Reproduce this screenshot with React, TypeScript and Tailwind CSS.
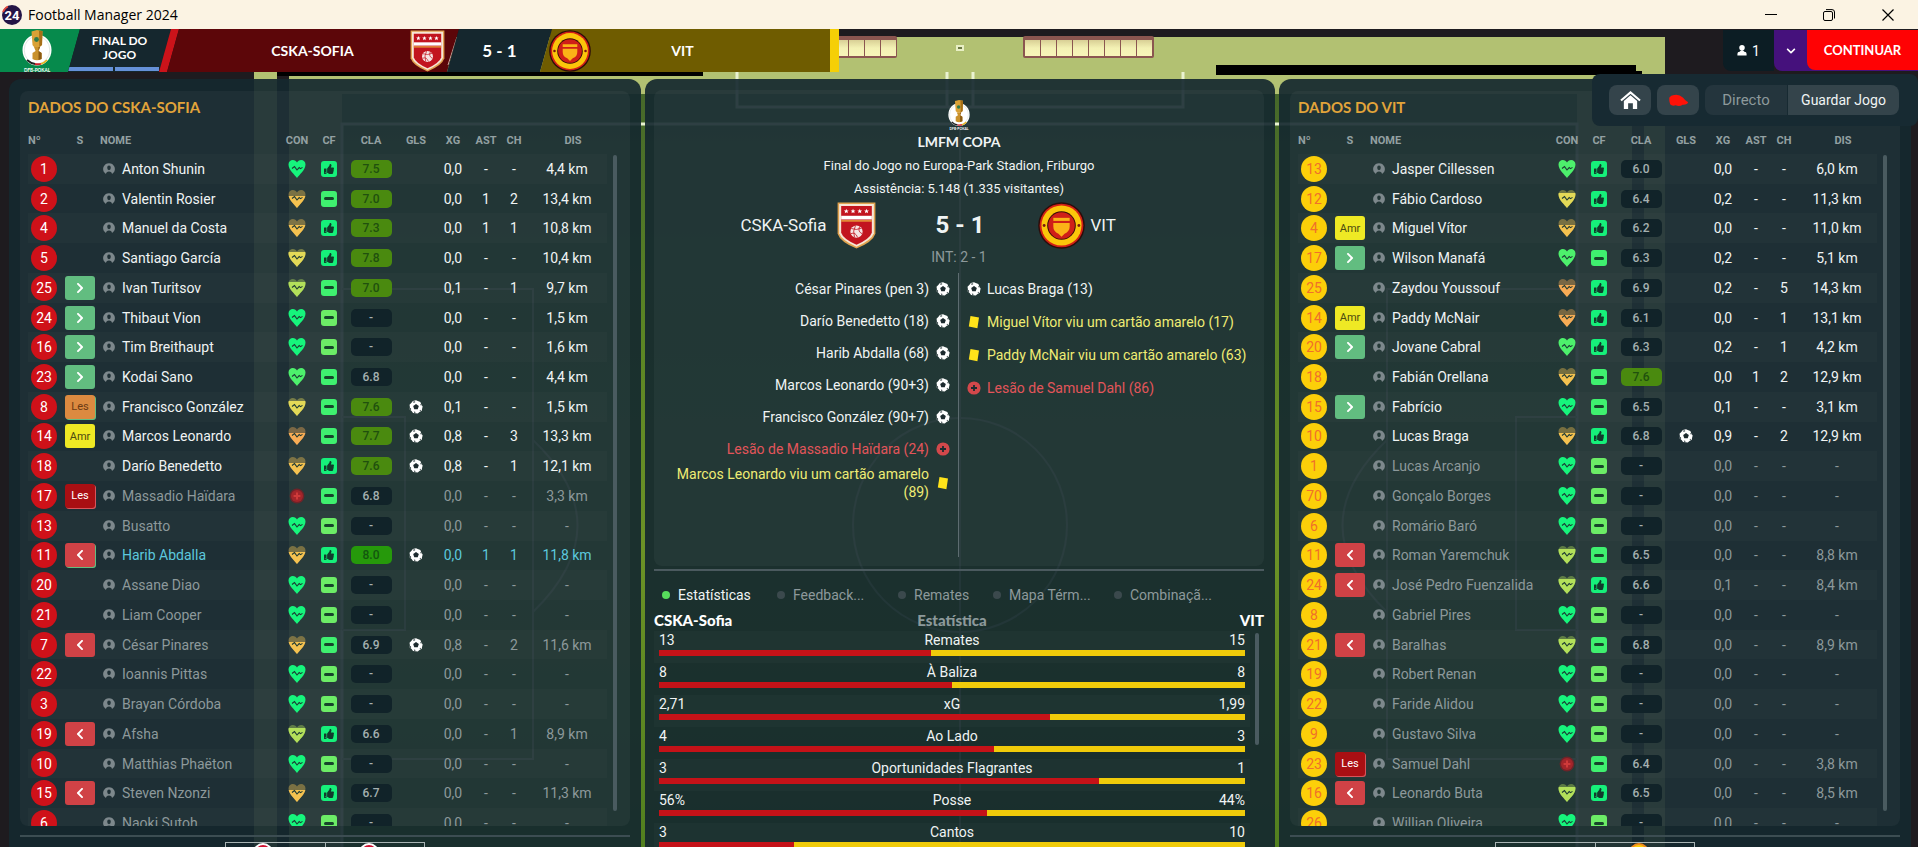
import React from "react";
import { FaThumbsUp, FaChevronLeft, FaChevronRight, FaChevronDown } from "react-icons/fa";

type Status = "in" | "out" | "amr" | "lesIn" | "lesOut" | "outIn";
type Heart = "full" | "good" | "lime" | "yellow" | "amber" | "orange" | "hurt";
type Player = {
  n: number;
  s?: Status;
  name: string;
  con: Heart;
  cf: "up" | "flat";
  cla: string;
  gol?: boolean;
  xg: string;
  ast: string;
  ch: string;
  dis: string;
  tone?: "dim" | "best";
};

const p = (
  n: number,
  s: Status | "",
  name: string,
  con: Heart,
  cf: "up" | "flat",
  cla: string,
  gol: boolean,
  xg: string,
  ast: string,
  ch: string,
  dis: string,
  tone?: "dim" | "best",
): Player => ({ n, s: s || undefined, name, con, cf, cla, gol, xg, ast, ch, dis, tone });

const HOME: Player[] = [
  p(1, "", "Anton Shunin", "full", "up", "7.5", false, "0,0", "-", "-", "4,4 km"),
  p(2, "", "Valentin Rosier", "amber", "flat", "7.0", false, "0,0", "1", "2", "13,4 km"),
  p(4, "", "Manuel da Costa", "amber", "up", "7.3", false, "0,0", "1", "1", "10,8 km"),
  p(5, "", "Santiago García", "yellow", "up", "7.8", false, "0,0", "-", "-", "10,4 km"),
  p(25, "in", "Ivan Turitsov", "lime", "flat", "7.0", false, "0,1", "-", "1", "9,7 km"),
  p(24, "in", "Thibaut Vion", "full", "flat", "-", false, "0,0", "-", "-", "1,5 km"),
  p(16, "in", "Tim Breithaupt", "full", "flat", "-", false, "0,0", "-", "-", "1,6 km"),
  p(23, "in", "Kodai Sano", "good", "flat", "6.8", false, "0,0", "-", "-", "4,4 km"),
  p(8, "lesIn", "Francisco González", "yellow", "flat", "7.6", true, "0,1", "-", "-", "1,5 km"),
  p(14, "amr", "Marcos Leonardo", "orange", "flat", "7.7", true, "0,8", "-", "3", "13,3 km"),
  p(18, "", "Darío Benedetto", "amber", "up", "7.6", true, "0,8", "-", "1", "12,1 km"),
  p(17, "lesOut", "Massadio Haïdara", "hurt", "flat", "6.8", false, "0,0", "-", "-", "3,3 km", "dim"),
  p(13, "", "Busatto", "full", "flat", "-", false, "0,0", "-", "-", "-", "dim"),
  p(11, "outIn", "Harib Abdalla", "amber", "up", "8.0", true, "0,0", "1", "1", "11,8 km", "best"),
  p(20, "", "Assane Diao", "full", "flat", "-", false, "0,0", "-", "-", "-", "dim"),
  p(21, "", "Liam Cooper", "full", "flat", "-", false, "0,0", "-", "-", "-", "dim"),
  p(7, "out", "César Pinares", "amber", "flat", "6.9", true, "0,8", "-", "2", "11,6 km", "dim"),
  p(22, "", "Ioannis Pittas", "full", "flat", "-", false, "0,0", "-", "-", "-", "dim"),
  p(3, "", "Brayan Córdoba", "full", "flat", "-", false, "0,0", "-", "-", "-", "dim"),
  p(19, "out", "Afsha", "lime", "up", "6.6", false, "0,0", "-", "1", "8,9 km", "dim"),
  p(10, "", "Matthias Phaëton", "full", "flat", "-", false, "0,0", "-", "-", "-", "dim"),
  p(15, "out", "Steven Nzonzi", "amber", "up", "6.7", false, "0,0", "-", "-", "11,3 km", "dim"),
  p(6, "", "Naoki Sutoh", "full", "flat", "-", false, "0,0", "-", "-", "-", "dim"),
];

const AWAY: Player[] = [
  p(13, "", "Jasper Cillessen", "good", "up", "6.0", false, "0,0", "-", "-", "6,0 km"),
  p(12, "", "Fábio Cardoso", "yellow", "up", "6.4", false, "0,2", "-", "-", "11,3 km"),
  p(4, "amr", "Miguel Vítor", "amber", "up", "6.2", false, "0,0", "-", "-", "11,0 km"),
  p(17, "in", "Wilson Manafá", "good", "flat", "6.3", false, "0,2", "-", "-", "5,1 km"),
  p(25, "", "Zaydou Youssouf", "orange", "up", "6.9", false, "0,2", "-", "5", "14,3 km"),
  p(14, "amr", "Paddy McNair", "orange", "up", "6.1", false, "0,0", "-", "1", "13,1 km"),
  p(20, "in", "Jovane Cabral", "good", "up", "6.3", false, "0,2", "-", "1", "4,2 km"),
  p(18, "", "Fabián Orellana", "amber", "flat", "7.6", false, "0,0", "1", "2", "12,9 km"),
  p(15, "in", "Fabrício", "full", "flat", "6.5", false, "0,1", "-", "-", "3,1 km"),
  p(10, "", "Lucas Braga", "amber", "up", "6.8", true, "0,9", "-", "2", "12,9 km"),
  p(1, "", "Lucas Arcanjo", "full", "flat", "-", false, "0,0", "-", "-", "-", "dim"),
  p(70, "", "Gonçalo Borges", "full", "flat", "-", false, "0,0", "-", "-", "-", "dim"),
  p(6, "", "Romário Baró", "full", "flat", "-", false, "0,0", "-", "-", "-", "dim"),
  p(11, "out", "Roman Yaremchuk", "lime", "flat", "6.5", false, "0,0", "-", "-", "8,8 km", "dim"),
  p(24, "out", "José Pedro Fuenzalida", "lime", "up", "6.6", false, "0,1", "-", "-", "8,4 km", "dim"),
  p(8, "", "Gabriel Pires", "full", "flat", "-", false, "0,0", "-", "-", "-", "dim"),
  p(21, "out", "Baralhas", "lime", "flat", "6.8", false, "0,0", "-", "-", "8,9 km", "dim"),
  p(19, "", "Robert Renan", "full", "flat", "-", false, "0,0", "-", "-", "-", "dim"),
  p(22, "", "Faride Alidou", "full", "flat", "-", false, "0,0", "-", "-", "-", "dim"),
  p(9, "", "Gustavo Silva", "full", "flat", "-", false, "0,0", "-", "-", "-", "dim"),
  p(23, "lesOut", "Samuel Dahl", "hurt", "flat", "6.4", false, "0,0", "-", "-", "3,8 km", "dim"),
  p(16, "out", "Leonardo Buta", "lime", "up", "6.5", false, "0,0", "-", "-", "8,5 km", "dim"),
  p(26, "", "Willian Oliveira", "full", "flat", "-", false, "0,0", "-", "-", "-", "dim"),
];

const STATS = [
  { home: "13", label: "Remates", away: "15", share: 46.4 },
  { home: "8", label: "À Baliza", away: "8", share: 50 },
  { home: "2,71", label: "xG", away: "1,99", share: 66.7 },
  { home: "4", label: "Ao Lado", away: "3", share: 57.1 },
  { home: "3", label: "Oportunidades Flagrantes", away: "1", share: 75 },
  { home: "56%", label: "Posse", away: "44%", share: 56 },
  { home: "3", label: "Cantos", away: "10", share: 23 },
];

type MatchEvent = { text: string; kind: "goal" | "card" | "injury" };
const HOME_EVENTS: MatchEvent[] = [
  { text: "César Pinares (pen 3)", kind: "goal" },
  { text: "Darío Benedetto (18)", kind: "goal" },
  { text: "Harib Abdalla (68)", kind: "goal" },
  { text: "Marcos Leonardo (90+3)", kind: "goal" },
  { text: "Francisco González (90+7)", kind: "goal" },
  { text: "Lesão de Massadio Haïdara (24)", kind: "injury" },
  { text: "Marcos Leonardo viu um cartão amarelo (89)", kind: "card" },
];
const AWAY_EVENTS: MatchEvent[] = [
  { text: "Lucas Braga (13)", kind: "goal" },
  { text: "Miguel Vítor viu um cartão amarelo (17)", kind: "card" },
  { text: "Paddy McNair viu um cartão amarelo (63)", kind: "card" },
  { text: "Lesão de Samuel Dahl (86)", kind: "injury" },
];

const HEART_PATH =
  "M9 19 C7 16 0.5 11 0.5 5.5 C0.5 2.5 2.6 1 4.8 1 C6.8 1 8.2 2 9 3.6 C9.8 2 11.2 1 13.2 1 C15.4 1 17.5 2.5 17.5 5.5 C17.5 11 11 16 9 19 Z";

const HEARTS: Record<Exclude<Heart, "hurt">, { fill: string; cut: number }> = {
  full: { fill: "#16f57c", cut: 0 },
  good: { fill: "#4df06c", cut: 0 },
  lime: { fill: "#b3e05a", cut: 4 },
  yellow: { fill: "#e3d957", cut: 4 },
  amber: { fill: "#f5c250", cut: 7 },
  orange: { fill: "#f8ac55", cut: 7 },
};

function Condition({ kind }: { kind: Heart }) {
  if (kind === "hurt") {
    return (
      <svg viewBox="0 0 18 20" className="mx-auto block h-5 w-[18px]" role="img" aria-label="Lesionado">
        <circle cx="9" cy="10" r="7.4" fill="#6d2429" />
        <circle cx="9" cy="10" r="6" fill="#a3252a" />
        <path d="M9 6.6v6.8M5.6 10h6.8" stroke="#cf3a3a" strokeWidth="2" />
      </svg>
    );
  }
  const h = HEARTS[kind];
  return (
    <svg viewBox="0 0 18 20" className="mx-auto block h-5 w-[18px]" role="img" aria-label="Condição">
      <path d={HEART_PATH} fill={h.fill} opacity={h.cut ? 0.4 : 1} />
      {h.cut > 0 && (
        <svg x="0" y={h.cut} width="18" height={20 - h.cut} viewBox={`0 ${h.cut} 18 ${20 - h.cut}`}>
          <path d={HEART_PATH} fill={h.fill} />
        </svg>
      )}
      <path d="M4 9.5 L6.5 7.6 L9 11 L11.2 8.6 L12.6 9.6 L14.5 8.4" fill="none" stroke="#1d3a34" strokeWidth="1.1" />
    </svg>
  );
}

function Form({ kind, soft }: { kind: "up" | "flat"; soft: boolean }) {
  const tone = kind === "up" ? "bg-[#16f07a]" : soft ? "bg-[#6cec66]" : "bg-[#3ff06f]";
  return (
    <span className={`mx-auto flex h-4 w-4 items-center justify-center rounded-[3px] ${tone}`}>
      {kind === "up" ? (
        <FaThumbsUp className="h-[10px] w-[10px] text-[#123a2c]" />
      ) : (
        <span className="h-[3px] w-[10px] rounded-xs bg-[#17442b]" />
      )}
    </span>
  );
}

function Ball({ className }: { className: string }) {
  return (
    <svg viewBox="0 0 16 16" className={className} role="img" aria-label="Golo">
      <path
        d="M8 0.4 L10 1 L13 2.4 L14 5 L15.6 7.4 L15 10 L14.6 12.2 L12 13.8 L10 15.4 L7.4 15.2 L4.6 14.8 L3 12.6 L0.8 10.8 L1 8 L0.6 5.4 L2.6 3.4 L4.4 1.2 Z"
        fill="#fff"
      />
      <path d="M8 4.6 L11.2 6.9 L10 10.6 H6 L4.8 6.9 Z" fill="#1c2a2e" />
      <path d="M5.4 1.2 L7.4 2.4 L5 3.4 Z M0.8 8.6 L2.6 10.4 L1.4 11.6 Z M12.6 4.6 L13.8 5.2 L14 7 Z M5.4 13 L7.6 13.6 L6.6 15 Z M12 12 L13.6 11 L13.2 12.8 Z" fill="#1c2a2e" />
    </svg>
  );
}

function StatusBadge({ s }: { s: Status }) {
  const base = "mx-auto flex h-6 w-[30px] items-center justify-center rounded-[3px] text-[11px] leading-none ";
  if (s === "in")
    return (
      <span className={base + "bg-[#62bd80] text-white"}>
        <FaChevronRight className="h-3 w-3" />
      </span>
    );
  if (s === "out")
    return (
      <span className={base + "bg-[#d04246] text-white"}>
        <FaChevronLeft className="h-3 w-3" />
      </span>
    );
  if (s === "outIn")
    return (
      <span className={base + "bg-[#d04246] text-white shadow-[1px_1px_0_#62bd80]"}>
        <FaChevronLeft className="h-3 w-3" />
      </span>
    );
  if (s === "amr") return <span className={base + "bg-[#efe924] text-[#4c4a10]"}>Amr</span>;
  if (s === "lesIn")
    return <span className={base + "bg-[#dc8a40] text-[#6b3a14] shadow-[1px_1px_0_#62bd80]"}>Les</span>;
  return <span className={base + "bg-[#a90f13] text-white shadow-[1px_1px_0_#d8545a]"}>Les</span>;
}

function PersonIcon() {
  return (
    <svg viewBox="0 0 12 12" className="h-3 w-3 shrink-0" aria-hidden="true">
      <path
        fillRule="evenodd"
        fill="currentColor"
        d="M6 0.2 A5.8 5.8 0 0 1 10.4 9.8 L9 11 Q8.8 8.4 6 8.4 Q3.2 8.4 3 11 L1.6 9.8 A5.8 5.8 0 0 1 6 0.2 Z M6 2.6 Q4.2 2.6 4.2 4.8 Q4.3 7.2 6 7.2 Q7.7 7.2 7.8 4.8 Q7.8 2.6 6 2.6 Z"
      />
    </svg>
  );
}

function Rating({ value }: { value: string }) {
  const tone =
    value === "-"
      ? "bg-[#112329] text-[#a5b0b0]"
      : value >= "8.0"
        ? "bg-[#26990b] text-[#12570f]"
        : value >= "7.0"
          ? "bg-[#4a8a0f] text-[#20500e]"
          : "bg-[#112329] text-[#a5b0b0]";
  return (
    <span className={`mx-auto flex h-[18px] w-[41px] items-center justify-center rounded-[5px] text-xs font-medium leading-none ${tone}`}>
      {value}
    </span>
  );
}

function TeamPanel({ title, players, side }: { title: string; players: Player[]; side: "home" | "away" }) {
  const disc = side === "home" ? "bg-[#cf1119] text-white" : "bg-[#fccf09] text-[#f0702a]";
  return (
    <section className="flex min-w-0 flex-1 flex-col rounded-t-xl bg-[#15282f]/92 px-[11px] pt-3">
      <div className="flex min-h-0 flex-1 flex-col rounded-lg bg-white/4 pl-2">
        <h2 className="h-8 shrink-0 font-[Lato] text-[15px] font-bold leading-8 text-[#e2a43a]">{title}</h2>
        <div className="flex min-h-0 flex-1 gap-[6px] overflow-hidden pr-[13px]">
          <table className="h-[715px] flex-1 table-fixed border-collapse text-center text-sm">
            <colgroup>
              <col className="w-8" />
              <col className="w-10" />
              <col />
              <col className="w-8" />
              <col className="w-8" />
              <col className="w-[52px]" />
              <col className="w-[38px]" />
              <col className="w-9" />
              <col className="w-[30px]" />
              <col className="w-[26px]" />
              <col className="w-20" />
            </colgroup>
            <thead>
              <tr className="h-[31px] text-[11px] text-[#93a0a2] [&>th]:pt-1">
                <th className="text-left font-bold">Nº</th>
                <th className="font-bold">S</th>
                <th className="text-left font-bold">NOME</th>
                <th className="font-bold">CON</th>
                <th className="font-bold">CF</th>
                <th className="font-bold">CLA</th>
                <th className="font-bold">GLS</th>
                <th className="font-bold">XG</th>
                <th className="font-bold">AST</th>
                <th className="font-bold">CH</th>
                <th className="pl-3 font-bold">DIS</th>
              </tr>
            </thead>
            <tbody>
              {players.map((row) => {
                const tone =
                  row.tone === "dim" ? "text-[#8d999b]" : row.tone === "best" ? "text-[#5cc8dd]" : "text-[#f0f4f4]";
                return (
                  <tr key={row.n} className={`leading-none odd:bg-white/2 ${tone}`}>
                    <td>
                      <span className={`mx-auto flex h-[26px] w-[26px] items-center justify-center rounded-full ${disc}`}>
                        {row.n}
                      </span>
                    </td>
                    <td>{row.s && <StatusBadge s={row.s} />}</td>
                    <td>
                      <div className="flex items-center gap-[7px] pl-[3px]">
                        <span className="text-[#7d888c]">
                          <PersonIcon />
                        </span>
                        <a href="#jogador" className="whitespace-nowrap leading-5">
                          {row.name}
                        </a>
                      </div>
                    </td>
                    <td>
                      <Condition kind={row.con} />
                    </td>
                    <td>
                      <Form kind={row.cf} soft={row.cla === "-"} />
                    </td>
                    <td>
                      <Rating value={row.cla} />
                    </td>
                    <td>{row.gol && <Ball className="mx-auto block h-[14px] w-[14px]" />}</td>
                    <td>{row.xg}</td>
                    <td>{row.ast}</td>
                    <td>{row.ch}</td>
                    <td>{row.dis}</td>
                  </tr>
                );
              })}
            </tbody>
          </table>
          <div className="mt-8 mb-[15px] w-1 shrink-0 rounded-full bg-[#4a5b60]" />
        </div>
      </div>
      <div className="h-[21px] shrink-0 overflow-hidden pt-[9px]">
        <div className="h-0.5 bg-[#3c4d52]" />
        <div className="mx-auto mt-[5px] flex h-12 w-[200px] border border-[#a8b3b3]">
          <div className="flex-1 border-r border-[#a8b3b3]">
            {side === "home" && <div className="ml-[27px] h-5 w-5 rounded-full border-2 border-white bg-[#cf1130]" />}
          </div>
          <div className="flex-1">
            <div
              className={
                side === "home"
                  ? "ml-[33px] h-5 w-5 rounded-full border-2 border-white bg-[#cf1130]"
                  : "ml-[33px] h-5 w-5 rounded-full border-2 border-[#f08a1c] bg-[#fccf09]"
              }
            />
          </div>
        </div>
      </div>
    </section>
  );
}

function HomeCrest({ className }: { className: string }) {
  return (
    <svg viewBox="0 0 38 46" className={className} role="img" aria-label="CSKA-Sofia">
      <path d="M0.5 0.5 H37.5 V31 Q35 39 19 45.5 Q3 39 0.5 31 Z" fill="#e0a24f" />
      <path d="M2 2 H36 V30.5 Q34 37 19 43.8 Q4 37 2 30.5 Z" fill="#f7e6d6" />
      <path d="M4 4 H34 V30 Q32 36 19 41.8 Q6 36 4 30 Z" fill="#c2141f" />
      {[9, 15.6, 22.2, 28.8].map((x) => (
        <path
          key={x}
          transform={`translate(${x} 9)`}
          fill="#fff"
          d="M0 -2.4 L0.7 -0.8 L2.4 -0.7 L1.1 0.4 L1.5 2.1 L0 1.1 L-1.5 2.1 L-1.1 0.4 L-2.4 -0.7 L-0.7 -0.8 Z"
        />
      ))}
      <rect x="4" y="13.5" width="30" height="3.6" fill="#fff" />
      <rect x="4" y="17.8" width="30" height="1.4" fill="#e8a23c" />
      <circle cx="19" cy="29" r="6" fill="#f5e4e4" />
      <path
        d="M14 26 Q19 28 24 25.5 M13.5 31 Q18 29 20 34.6 M18 23.2 Q15 28 17 34.5 M22 24 Q20 29 24.4 31"
        fill="none"
        stroke="#c2141f"
        strokeWidth="0.8"
      />
    </svg>
  );
}

function AwayCrest({ className }: { className: string }) {
  return (
    <svg viewBox="0 0 46 46" className={className} role="img" aria-label="VIT">
      <circle cx="23" cy="23" r="22.8" fill="#2a0d0a" />
      <circle cx="23" cy="23" r="21.4" fill="#d32016" />
      <circle cx="23" cy="23" r="19.6" fill="#fbc60a" />
      <circle cx="23" cy="23" r="14" fill="#3a0d0a" />
      <circle cx="23" cy="23" r="13" fill="#cf1f18" />
      <path d="M15 15.5 H31 V18.5 H15 Z" fill="#fbb317" />
      <path d="M15 20.5 H31 V24 Q31 29 26 31 L23 34 L20 31 Q15 29 15 24 Z" fill="#fbb317" />
      <circle cx="6" cy="23" r="1.4" fill="#7a1712" />
      <circle cx="40" cy="23" r="1.4" fill="#7a1712" />
    </svg>
  );
}

function CupLogo({ className }: { className: string }) {
  return (
    <svg viewBox="0 0 30 43" className={className} role="img" aria-label="LMFM Copa">
      <ellipse cx="15" cy="21" rx="14.5" ry="15.5" fill="#fff" />
      <ellipse cx="15" cy="21" rx="12.8" ry="13.8" fill="none" stroke="#cdd6cf" strokeWidth="0.6" />
      <path d="M9.5 2.5 L15 1 L20.5 2 L20 16 Q18 18.5 15 18.5 Q11.5 18.5 10.5 16 Z" fill="#d9a136" />
      <path d="M17 2 L20.5 2 L20 16 L17.4 18 Z" fill="#a66f17" />
      <path d="M12 18 H18 L16.6 22 L19.6 24 V30 Q15 32.5 10.5 30 V24 L13.6 22 Z" fill="#c9912c" />
      <path d="M16.5 18 H18 L16.6 22 L19.6 24 V30 L16.5 31 Z" fill="#8a5a12" />
      <circle cx="14.5" cy="10.5" r="2.4" fill="#2f7a4a" />
      <path d="M5 31 Q9 34.5 13 35" fill="none" stroke="#222" strokeWidth="1.8" />
      <path d="M13 35 Q16 35.6 19 34.8" fill="none" stroke="#d21f2b" strokeWidth="1.8" />
      <path d="M19 34.8 Q23 33.5 25 31" fill="none" stroke="#e6b422" strokeWidth="1.8" />
      <text x="15" y="42.5" textAnchor="middle" fontSize="4.6" fontWeight="700" fontFamily="Lato, sans-serif" fill="#fff">
        DFB-POKAL
      </text>
    </svg>
  );
}

function Pitch() {
  const cells = [0, 1, 2, 3, 4, 5, 6, 7];
  return (
    <svg
      viewBox="0 29 1918 818"
      preserveAspectRatio="none"
      className="absolute inset-0 h-full w-full"
      aria-hidden="true"
    >
      <defs>
        <linearGradient id="grass" x1="0" y1="0" x2="0" y2="1">
          <stop offset="0" stopColor="#46682a" />
          <stop offset="0.3" stopColor="#5a8424" />
          <stop offset="0.6" stopColor="#6c9226" />
          <stop offset="1" stopColor="#52801f" />
        </linearGradient>
        <linearGradient id="bench" x1="0" y1="0" x2="0" y2="1">
          <stop offset="0" stopColor="#d8cf95" />
          <stop offset="0.5" stopColor="#f3f1b4" />
          <stop offset="1" stopColor="#f7f5b8" />
        </linearGradient>
      </defs>
      <rect x="0" y="29" width="1918" height="818" fill="#1e1b1f" />
      <rect x="254" y="37" width="1411" height="810" fill="#b2c172" />
      <rect x="342" y="94" width="1235" height="753" fill="url(#grass)" />
      <rect x="277" y="76" width="12" height="771" fill="#1e1b1f" />
      <rect x="277" y="72" width="426" height="4" fill="#000" />
      <path d="M1216 65 H1636 V71 H1642 V75 H1216 Z" fill="#000" />
      <rect x="1632" y="75" width="12" height="772" fill="#1e1b1f" />
      <rect x="766" y="36" width="131" height="22" rx="2" fill="#8b5650" />
      {cells.map((i) => (
        <rect key={i} x={769 + i * 16} y="40" width="15" height="16" fill="url(#bench)" />
      ))}
      <rect x="1023" y="36" width="131" height="22" rx="2" fill="#8b5650" />
      {cells.map((i) => (
        <rect key={i} x={1025 + i * 16} y="40" width="15" height="16" fill="url(#bench)" />
      ))}
      <rect x="956" y="45" width="8" height="6" fill="#e8efc4" />
      <rect x="958" y="47" width="4" height="2" fill="#6c7a45" />
      <g fill="none" stroke="#e9f2d2" strokeWidth="3">
        <path d="M342 847 V124 H1577 V847" />
        <path d="M737 72 V107 H1183 V72 M947 72 V107 M973 72 V107" />
      </g>
      <g fill="none" stroke="#c4d9a4" strokeWidth="2">
        <path d="M960 124 V847" />
        <circle cx="960" cy="525" r="107" />
        <path d="M342 289 H533 V759 H342 M342 417 H405 V630 H342 M533 440 Q622 525 533 612" />
        <path d="M1577 289 H1387 V759 H1577 M1577 417 H1516 V630 H1577 M1387 440 Q1298 525 1387 612" />
      </g>
    </svg>
  );
}

function EventIcon({ kind }: { kind: MatchEvent["kind"] }) {
  if (kind === "goal") return <Ball className="h-[14px] w-[14px] shrink-0" />;
  return (
    <svg viewBox="0 0 14 14" className="h-[14px] w-[14px] shrink-0" aria-hidden="true">
      {kind === "card" ? (
        <path d="M3.5 1 L12 2.6 L10.4 13.2 L1.8 11.6 Z" fill="#ffe31a" />
      ) : (
        <>
          <circle cx="7" cy="7" r="6.6" fill="#d3484b" />
          <path d="M7 4 V10 M4 7 H10" stroke="#1d2c30" strokeWidth="1.8" />
        </>
      )}
    </svg>
  );
}

const EVENT_TONE: Record<MatchEvent["kind"], string> = {
  goal: "text-[#f0f4f4]",
  card: "text-[#efec74]",
  injury: "text-[#e2555a]",
};

function MatchPanel() {
  return (
    <section className="flex min-w-0 flex-1 flex-col rounded-t-xl bg-[#15282f]/92 pt-[11px] pl-[9px] pr-[11px]">
      <div className="flex h-[476px] shrink-0 flex-col items-center rounded-lg bg-white/4 pt-[9px] text-sm text-[#f0f4f4]">
        <CupLogo className="h-8 w-[22px]" />
        <h1 className="mt-px h-6 font-[Lato] text-sm font-bold leading-5">LMFM COPA</h1>
        <p className="h-[23px] leading-5 text-[13px]">Final do Jogo no Europa-Park Stadion, Friburgo</p>
        <p className="h-[22px] leading-5 text-[13px]">Assistência: 5.148 (1.335 visitantes)</p>
        <div className="grid h-12 w-full grid-cols-[1fr_162px_1fr] items-center pr-[5px] text-[17px]">
          <div className="flex items-center justify-end gap-[10px]">
            <span>CSKA-Sofia</span>
            <HomeCrest className="h-[47px] w-[39px]" />
          </div>
          <strong className="pl-[7px] text-center text-2xl font-bold">5 - 1</strong>
          <div className="flex items-center gap-[6px]">
            <AwayCrest className="h-[47px] w-[47px]" />
            <span>VIT</span>
          </div>
        </div>
        <p className="h-6 leading-4 text-[#8d999b]">INT: 2 - 1</p>
        <div className="grid h-[284px] w-full grid-cols-2">
          <ul className="flex flex-col border-r border-[#5d6c70] pl-4 pr-2">
            {HOME_EVENTS.map((e) => (
              <li
                key={e.text}
                className={`flex items-center justify-end gap-[7px] text-right leading-[18px] ${e.kind === "card" ? "h-9" : "h-8"} ${EVENT_TONE[e.kind]}`}
              >
                <span>{e.text}</span>
                <EventIcon kind={e.kind} />
              </li>
            ))}
          </ul>
          <ul className="flex flex-col pl-2">
            {AWAY_EVENTS.map((e) => (
              <li
                key={e.text}
                className={`flex items-center gap-[6px] whitespace-nowrap leading-[18px] ${e.kind === "goal" ? "h-8" : "h-[33px]"} ${EVENT_TONE[e.kind]}`}
              >
                <EventIcon kind={e.kind} />
                <span>{e.text}</span>
              </li>
            ))}
          </ul>
        </div>
      </div>
      <div className="mt-[3px] h-0.5 shrink-0 bg-[#4b5a5f]" />
      <nav className="mt-2 flex h-8 shrink-0 items-center text-sm">
        {[
          { label: "Estatísticas", w: "w-[115px]", on: true },
          { label: "Feedback...", w: "w-[121px]", on: false },
          { label: "Remates", w: "w-[95px]", on: false },
          { label: "Mapa Térm...", w: "w-[121px]", on: false },
          { label: "Combinaçã...", w: "w-[121px]", on: false },
        ].map((t) => (
          <button
            key={t.label}
            type="button"
            className={`flex h-8 items-center gap-2 whitespace-nowrap pl-2 text-left ${t.w} ${t.on ? "text-[#f0f4f4]" : "text-[#8d999b]"}`}
          >
            <span className={`h-2 w-2 shrink-0 rounded-full ${t.on ? "bg-[#57dc5c]" : "bg-[#3b494d]"}`} />
            {t.label}
          </button>
        ))}
      </nav>
      <div className="grid h-5 shrink-0 grid-cols-3 font-[Lato] text-[15px] font-black leading-[18px] text-white">
        <span>CSKA-Sofia</span>
        <span className="pr-[14px] text-center text-[#8d999b]">Estatística</span>
        <span className="text-right">VIT</span>
      </div>
      <div className="flex min-h-0 flex-1 overflow-hidden">
        <div className="min-w-0 flex-1">
          {STATS.map((s) => (
            <div key={s.label} className="h-8 px-[5px] odd:bg-white/2">
              <div className="grid h-[19px] grid-cols-[1fr_auto_1fr] text-sm leading-[19px] text-[#f0f4f4]">
                <span>{s.home}</span>
                <span>{s.label}</span>
                <span className="text-right">{s.away}</span>
              </div>
              <div className="flex h-[6px] bg-[#f0cb0a]">
                <div className="bg-[#c51218]" style={{ width: `${s.share}%` }} />
              </div>
            </div>
          ))}
        </div>
        <div className="mx-[5px] mt-[2px] h-28 w-1 shrink-0 rounded-full bg-[#4a5b60]" />
      </div>
    </section>
  );
}

function ScoreBanner() {
  return (
    <div className="flex h-[43px] w-[839px] shrink-0 font-[Lato] font-bold text-white">
      <div className="flex w-20 shrink-0 justify-center bg-[#068a4c] pr-[6px] [clip-path:polygon(0_0,100%_0,68px_100%,0_100%)]">
        <CupLogo className="h-[43px] w-[30px]" />
      </div>
      <div className="-ml-3 flex w-[103px] shrink-0 flex-col items-center bg-[#15272e] [clip-path:polygon(12px_0,100%_0,91px_100%,0_100%)]">
        <div className="flex h-[38px] flex-col items-center justify-center text-xs leading-[14px]">
          <span>FINAL DO</span>
          <span>JOGO</span>
        </div>
        <div className="flex h-1 w-full gap-[2px] pr-3">
          <div className="flex-1 bg-[#6591d8]" />
          <div className="flex-1 bg-[#6591d8]" />
        </div>
      </div>
      <div className="-ml-3 w-5 shrink-0 bg-[#cb131a] [clip-path:polygon(12px_0,100%_0,8px_100%,0_100%)]" />
      <div className="-ml-3 flex w-[292px] shrink-0 items-center bg-[#5c0609] [clip-path:polygon(12px_0,100%_0,280px_100%,0_100%)]">
        <span className="flex-1 pl-12 text-center text-sm">CSKA-SOFIA</span>
        <HomeCrest className="h-[42px] w-[35px] shrink-0" />
        <svg viewBox="0 0 14 43" className="h-[43px] w-[14px] shrink-0" aria-hidden="true">
          <path d="M12 8 L3 36" stroke="#c9a9a2" strokeWidth="1" />
        </svg>
      </div>
      <div className="-ml-3 flex w-[105px] shrink-0 items-center justify-center bg-[#15272e] text-[17px] [clip-path:polygon(12px_0,100%_0,93px_100%,0_100%)]">
        5 - 1
      </div>
      <div className="-ml-3 flex flex-1 items-center bg-[#6f5c00] pl-[9px] [clip-path:polygon(12px_0,100%_0,100%_100%,0_100%)]">
        <AwayCrest className="h-[42px] w-[42px] shrink-0" />
        <span className="flex-1 pr-14 text-center text-sm">VIT</span>
      </div>
      <div className="w-[9px] shrink-0 bg-[#f5cf06]" />
    </div>
  );
}

function TitleBar() {
  return (
    <header className="flex h-[29px] shrink-0 items-center bg-[#fbf3e3] text-black">
      <svg viewBox="0 0 20 20" className="ml-[2px] h-5 w-5" aria-hidden="true">
        <circle cx="10" cy="10" r="10" fill="#241546" />
        <path d="M1 7 A9.5 9.5 0 0 1 6 1.4" fill="none" stroke="#e2483d" strokeWidth="1.6" />
        <text x="10" y="14.5" textAnchor="middle" fontSize="13" fontWeight="700" fontFamily="Roboto, sans-serif" fill="#fff">
          24
        </text>
      </svg>
      <span className="ml-[6px] font-['Open_Sans'] text-sm">Football Manager 2024</span>
      <div className="ml-auto flex h-full">
        <button type="button" aria-label="Minimizar" className="flex w-[58px] items-center justify-center">
          <svg viewBox="0 0 12 12" className="h-3 w-3" stroke="#000" fill="none">
            <path d="M0 5.5h12" />
          </svg>
        </button>
        <button type="button" aria-label="Restaurar" className="flex w-[58px] items-center justify-center">
          <svg viewBox="0 0 12 12" className="h-3 w-3" stroke="#000" fill="none">
            <rect x="0.5" y="2.5" width="9" height="9" rx="1.5" />
            <path d="M3 0.6 H9 Q11.5 0.6 11.5 3 V9.5" />
          </svg>
        </button>
        <button type="button" aria-label="Fechar" className="flex w-[60px] items-center justify-center">
          <svg viewBox="0 0 12 12" className="h-3 w-3" stroke="#000" strokeWidth="1.2" fill="none">
            <path d="M0.5 0.5 L11.5 11.5 M11.5 0.5 L0.5 11.5" />
          </svg>
        </button>
      </div>
    </header>
  );
}

function Toolbar() {
  return (
    <div className="absolute top-[45px] right-0 flex h-[52px] items-center gap-[6px] rounded-lg bg-[#172a32] pr-[19px] pl-[17px] text-[15px]">
      <button type="button" aria-label="Início" className="flex h-[30px] w-[42px] items-center justify-center rounded-lg bg-[#34444b]">
        <svg viewBox="0 0 22 20" className="h-[19px] w-[21px]">
          <path d="M1 10 L11 1.5 L21 10" fill="none" stroke="#fff" strokeWidth="2.2" />
          <path d="M4 10.5 L11 4.6 L18 10.5 V19 H13.5 V13 H8.5 V19 H4 Z" fill="#fff" />
        </svg>
      </button>
      <button type="button" aria-label="Clube" className="flex h-[30px] w-[42px] items-center justify-center rounded-lg bg-[#34444b]">
        <svg viewBox="0 0 22 14" className="h-[13px] w-[21px]">
          <path d="M1 4 Q3 0.6 7 1 Q12 0.4 16 4 Q18 7 21.4 9 Q20.5 12 15.5 11.6 Q12 14 8 12.2 Q4 13.4 2 11 Q0.8 8 1 4 Z" fill="#ff1208" />
        </svg>
      </button>
      <div className="flex h-[30px] overflow-hidden rounded-lg">
        <button type="button" className="w-[82px] bg-[#24353d] text-[#8d999b]">
          Directo
        </button>
        <button type="button" className="ml-px w-[111px] bg-[#34444b] text-sm text-[#f0f4f4]">
          Guardar Jogo
        </button>
      </div>
    </div>
  );
}

export default function App() {
  return (
    <div className="flex h-screen flex-col overflow-hidden bg-[#1e1b1f] font-[Roboto,sans-serif]">
      <TitleBar />
      <div className="relative flex min-h-0 flex-1 flex-col">
        <Pitch />
        <div className="relative flex h-[50px] shrink-0 items-start">
          <ScoreBanner />
          <div className="ml-auto flex h-[42px] text-sm text-white">
            <button type="button" className="mt-px flex w-[51px] items-center justify-center gap-[5px] rounded-bl-lg bg-[#0c1d24]">
              <svg viewBox="0 0 10 12" className="h-[11px] w-[10px]" fill="#fff" aria-hidden="true">
                <circle cx="5" cy="3" r="3" />
                <path d="M0 11.5 V9.5 Q0 7.6 2.4 7.4 L4 5.8 H6 L7.6 7.4 Q10 7.6 10 9.5 V11.5 Z" />
              </svg>
              1
            </button>
            <div className="mt-px flex rounded-bl-lg bg-[#45117c]">
              <button type="button" aria-label="Mais opções" className="flex w-[33px] items-center justify-center">
                <FaChevronDown className="h-[10px] w-[10px]" />
              </button>
              <button
                type="button"
                className="mb-px w-[111px] rounded-bl-lg bg-[#ff0204] font-[Lato] text-[13px] font-bold"
              >
                CONTINUAR
              </button>
            </div>
          </div>
        </div>
        <main className="relative flex min-h-0 flex-1 gap-1 pl-[9px] pr-[7px]">
          <TeamPanel title="DADOS DO CSKA-SOFIA" players={HOME} side="home" />
          <MatchPanel />
          <TeamPanel title="DADOS DO VIT" players={AWAY} side="away" />
        </main>
        <Toolbar />
      </div>
    </div>
  );
}
